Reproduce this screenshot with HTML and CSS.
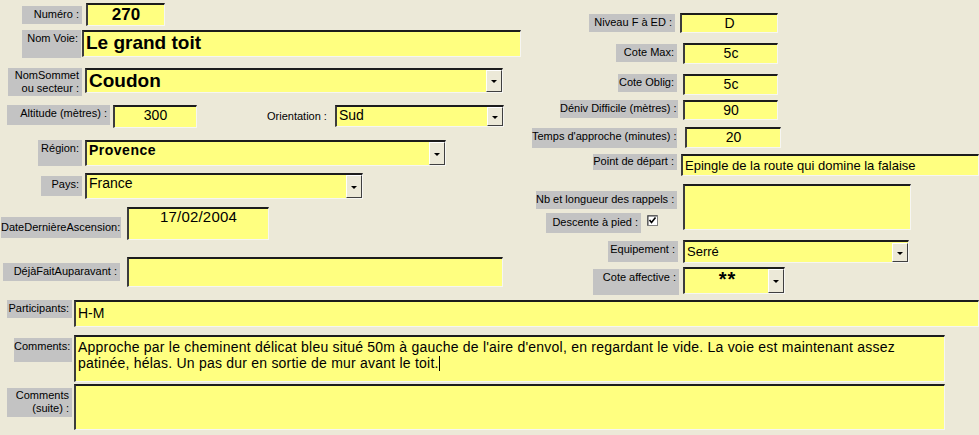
FILE: index.html
```html
<!DOCTYPE html>
<html lang="fr">
<head>
    <meta charset="UTF-8">
    <title>Fiche voie</title>
    <link rel="stylesheet" href="styles.css">
</head>
<body>
    <div class="form">
        <div class="top">
            <div class="col-left">
                <div class="row r-numero">
                    <div class="lbl">Numéro :</div>
                    <div class="fld big center">270</div>
                </div>
                <div class="row r-voie">
                    <div class="lbl">Nom Voie:</div>
                    <div class="fld huge">Le grand toit</div>
                </div>
                <div class="row r-sommet">
                    <div class="lbl two">NomSommet<br>ou secteur :</div>
                    <div class="fld combo huge"><span class="val">Coudon</span><span class="drop"></span></div>
                </div>
                <div class="row r-alt">
                    <div class="lbl">Altitude (mètres) :</div>
                    <div class="fld center">300</div>
                    <div class="plain">Orientation :</div>
                    <div class="fld combo"><span class="val">Sud</span><span class="drop"></span></div>
                </div>
                <div class="row r-region">
                    <div class="lbl">Région:</div>
                    <div class="fld combo bold"><span class="val">Provence</span><span class="drop"></span></div>
                </div>
                <div class="row r-pays">
                    <div class="lbl">Pays:</div>
                    <div class="fld combo"><span class="val">France</span><span class="drop"></span></div>
                </div>
                <div class="row r-date">
                    <div class="lbl">DateDernièreAscension:</div>
                    <div class="fld center date">17/02/2004</div>
                </div>
                <div class="row r-deja">
                    <div class="lbl">DéjàFaitAuparavant :</div>
                    <div class="fld"></div>
                </div>
            </div>

            <div class="col-right">
                <div class="row r-niveau">
                    <div class="lbl">Niveau F à ED :</div>
                    <div class="fld center">D</div>
                </div>
                <div class="row r-max">
                    <div class="lbl">Cote Max:</div>
                    <div class="fld center">5c</div>
                </div>
                <div class="row r-oblig">
                    <div class="lbl">Cote Oblig:</div>
                    <div class="fld center">5c</div>
                </div>
                <div class="row r-deniv">
                    <div class="lbl">Déniv Difficile (mètres) :</div>
                    <div class="fld center">90</div>
                </div>
                <div class="row r-temps">
                    <div class="lbl">Temps d'approche (minutes) :</div>
                    <div class="fld center">20</div>
                </div>
                <div class="row r-depart">
                    <div class="lbl">Point de départ :</div>
                    <div class="fld small">Epingle de la route qui domine la falaise</div>
                </div>
                <div class="row r-rappels">
                    <div class="stack">
                        <div class="lbl">Nb et longueur des rappels :</div>
                        <div class="check-row">
                            <div class="lbl">Descente à pied :</div>
                            <svg class="check" width="11" height="11" viewBox="0 0 11 11">
                                <rect x="0.5" y="0.5" width="10" height="10" fill="#fff" stroke="#808080"/>
                                <path d="M1 1H10M1 1V10" stroke="#404040"/>
                                <path d="M2.5 5 L4.5 7.5 L8.5 2.5" fill="none" stroke="#000" stroke-width="1.6"/>
                            </svg>
                        </div>
                    </div>
                    <div class="fld"></div>
                </div>
                <div class="row r-equip">
                    <div class="lbl">Equipement :</div>
                    <div class="fld combo small"><span class="val">Serré</span><span class="drop"></span></div>
                </div>
                <div class="row r-affect">
                    <div class="lbl">Cote affective :</div>
                    <div class="fld combo stars"><span class="val">**</span><span class="drop"></span></div>
                </div>
            </div>
        </div>

        <div class="bottom">
            <div class="row r-part">
                <div class="lbl">Participants:</div>
                <div class="fld">H-M</div>
            </div>
            <div class="row r-comm">
                <div class="lbl">Comments:</div>
                <div class="fld memo">Approche par le cheminent délicat bleu situé 50m à gauche de l'aire d'envol, en regardant le vide. La voie est maintenant assez<br>patinée, hélas. Un pas dur en sortie de mur avant le toit.<span class="caret"></span></div>
            </div>
            <div class="row r-suite">
                <div class="lbl two">Comments<br>(suite) :</div>
                <div class="fld"></div>
            </div>
        </div>
    </div>
</body>
</html>
```

FILE: styles.css
```css
body {
    margin: 0;
    background: #ece9d8;
    font-family: "Liberation Sans", Arial, sans-serif;
    color: #000;
}

.form {
    width: 979px;
    height: 435px;
    overflow: hidden;
}

.top {
    display: flex;
    height: 300px;
}

.col-left {
    width: 530px;
    padding-top: 3px;
}

.col-right {
    width: 449px;
    padding-top: 13px;
}

.row {
    display: flex;
    align-items: flex-start;
}

/* grey caption boxes */
.lbl {
    box-sizing: border-box;
    background: #c3c3c3;
    font-size: 11px;
    line-height: 13px;
    text-align: right;
    padding: 2px 3px 0 0;
    white-space: nowrap;
    flex-shrink: 0;
}

.lbl.two {
    line-height: 13px;
    padding-top: 1px;
}

.plain {
    font-size: 11px;
    margin: 5px 0 0 70px;
    width: 68px;
    flex-shrink: 0;
}

/* yellow text boxes */
.fld {
    box-sizing: border-box;
    background: #ffff80;
    border-style: solid;
    border-width: 2px 1px 1px 2px;
    border-color: #1c1c1c #f6f6f2 #f6f6f2 #3c3c3c;
    font-size: 14px;
    line-height: 17px;
    padding: 0 2px;
    white-space: nowrap;
    overflow: hidden;
    flex-shrink: 0;
}

.fld.center { text-align: center; }
.fld.big { font-size: 17px; font-weight: bold; line-height: 19px; }
.fld.huge { font-size: 19px; font-weight: bold; line-height: 22px; }
.fld.bold { font-size: 14px; font-weight: bold; letter-spacing: 0.5px; }
.fld.small { font-size: 13px; }
.fld.date { font-size: 15px; line-height: 16px; letter-spacing: 0.2px; }
.fld.stars { font-size: 20px; font-weight: bold; line-height: 20px; }
.fld.stars .val { text-align: center; letter-spacing: 1px; }

.fld.memo {
    white-space: normal;
    font-size: 14px;
    line-height: 16px;
    letter-spacing: 0.22px;
    padding-top: 2px;
}

.caret {
    display: inline-block;
    width: 1px;
    height: 15px;
    background: #000;
    vertical-align: -3px;
}

/* combo boxes */
.combo {
    display: flex;
    padding-right: 0;
}

.combo .val {
    flex: 1;
    overflow: hidden;
}

.drop {
    position: relative;
    box-sizing: border-box;
    width: 16px;
    height: 100%;
    background: #ece9d8;
    border-style: solid;
    border-width: 1px;
    border-color: #fff #404040 #404040 #fff;
    flex-shrink: 0;
}

.drop::after {
    content: "";
    position: absolute;
    left: 4px;
    top: 50%;
    margin-top: -1px;
    border-left: 3px solid transparent;
    border-right: 3px solid transparent;
    border-top: 3px solid #000;
}

/* left column */
.r-numero { height: 27px; }
.r-numero .lbl { margin: 3px 0 0 22px; width: 60px; height: 18px; }
.r-numero .fld { margin-left: 4px; width: 79px; height: 23px; }

.r-voie { height: 38px; }
.r-voie .lbl { margin-left: 22px; width: 59px; height: 28px; }
.r-voie .fld { margin-left: 1px; width: 439px; height: 27px; }

.r-sommet { height: 37px; }
.r-sommet .lbl { margin-left: 8px; width: 74px; height: 28px; }
.r-sommet .fld { margin-left: 3px; width: 418px; height: 25px; }

.r-alt { height: 35px; }
.r-alt .lbl { margin-left: 7px; width: 103px; height: 20px; }
.r-alt .fld { margin-left: 3px; width: 84px; height: 23px; }
.r-alt .combo { margin-left: 0; width: 169px; height: 22px; }

.r-region { height: 33px; }
.r-region .lbl { margin-left: 38px; width: 44px; height: 26px; }
.r-region .fld { margin-left: 3px; width: 361px; height: 26px; }

.r-pays { height: 34px; }
.r-pays .lbl { margin: 3px 0 0 41px; width: 41px; height: 20px; }
.r-pays .fld { margin-left: 3px; width: 278px; height: 26px; }

.r-date { height: 50px; }
.r-date .lbl { margin: 10px 0 0 1px; width: 120px; height: 21px; padding-top: 4px; }
.r-date .fld { margin-left: 6px; width: 142px; height: 33px; }

.r-deja { height: 43px; }
.r-deja .lbl { margin: 6px 0 0 3px; width: 117px; height: 18px; }
.r-deja .fld { margin-left: 7px; width: 376px; height: 30px; }

/* right column */
.r-niveau { height: 30px; }
.r-niveau .lbl { margin: 1px 0 0 59px; width: 86px; height: 18px; }
.r-niveau .fld { margin-left: 5px; width: 98px; height: 20px; }

.r-max { height: 31px; }
.r-max .lbl { margin: 1px 0 0 86px; width: 61px; height: 18px; }
.r-max .fld { margin-left: 6px; width: 95px; height: 21px; }

.r-oblig { height: 26px; }
.r-oblig .lbl { margin-left: 88px; width: 59px; height: 18px; }
.r-oblig .fld { margin-left: 6px; width: 95px; height: 21px; }

.r-deniv { height: 27px; }
.r-deniv .lbl { margin-left: 30px; width: 118px; height: 18px; }
.r-deniv .fld { margin-left: 5px; width: 95px; height: 20px; }

.r-temps { height: 27px; }
.r-temps .lbl { margin: 1px 0 0 2px; width: 145px; height: 20px; }
.r-temps .fld { margin-left: 8px; width: 96px; height: 21px; }

.r-depart { height: 30px; }
.r-depart .lbl { margin-left: 63px; width: 84px; height: 16px; padding-top: 1px; }
.r-depart .fld { margin-left: 4px; width: 298px; height: 22px; padding-top: 1px; }

.r-rappels { height: 56px; }
.r-rappels .stack { margin-left: 6px; width: 141px; flex-shrink: 0; }
.r-rappels .stack > .lbl { margin-top: 7px; width: 141px; height: 18px; }
.r-rappels > .fld { margin-left: 6px; width: 228px; height: 46px; }

.check-row {
    display: flex;
    align-items: flex-start;
    margin-top: 4px;
}

.check-row .lbl { margin-left: 10px; width: 95px; height: 20px; padding-top: 3px; }
.check { margin: 2px 0 0 6px; }

.r-equip { height: 27px; }
.r-equip .lbl { margin: 1px 0 0 78px; width: 70px; height: 21px; }
.r-equip .fld { margin-left: 5px; width: 226px; height: 23px; padding-top: 1px; }

.r-affect .lbl { margin: 2px 0 0 63px; width: 86px; height: 26px; }
.r-affect .fld { margin-left: 4px; width: 102px; height: 27px; }

/* bottom rows */
.r-part { height: 35px; }
.r-part .lbl { margin-left: 7px; width: 65px; height: 18px; }
.r-part .fld { margin-left: 2px; width: 905px; height: 27px; padding-top: 3px; }

.r-comm { height: 49px; }
.r-comm .lbl { margin: 3px 0 0 14px; width: 58px; height: 24px; }
.r-comm .fld { margin-left: 2px; width: 871px; height: 47px; }

.r-suite .lbl { margin: 4px 0 0 7px; width: 65px; height: 29px; }
.r-suite .fld { margin-left: 2px; width: 871px; height: 46px; }
```
